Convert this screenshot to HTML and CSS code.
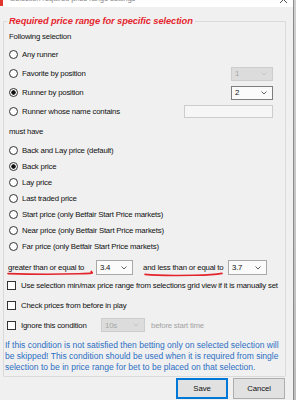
FILE: index.html
```html
<!DOCTYPE html>
<html>
<head>
<meta charset="utf-8">
<link rel="stylesheet" href="styles.css">
</head>
<body>
<div class="screen">
  <div class="window">
    <div class="titlebar">
      <span class="app-icon"></span>
      <span class="title">Selection required price range settings</span>
      <svg class="close" width="9" height="3" viewBox="0 0 9 3"><path d="M1 3 L8 -4 M8 3 L1 -4" stroke="#555" stroke-width="1" fill="none"/></svg>
    </div>
    <div class="client">
      <fieldset class="group">
        <legend>Required price range for specific selection</legend>
        <div class="caption first">Following selection</div>
        <div class="opt tall"><span class="radio"></span><span>Any runner</span></div>
        <div class="opt tall"><span class="radio"></span><span>Favorite by position</span>
          <span class="combo small disabled"><span class="val">1</span><svg class="chev" width="6" height="4" viewBox="0 0 6 4"><path d="M0.5 0.5 L3 3 L5.5 0.5" stroke="#c4c4c4" fill="none"/></svg></span></div>
        <div class="opt tall"><span class="radio on"></span><span>Runner by position</span>
          <span class="combo small"><span class="val">2</span><svg class="chev" width="6" height="4" viewBox="0 0 6 4"><path d="M0.5 0.5 L3 3 L5.5 0.5" stroke="#606060" fill="none"/></svg></span></div>
        <div class="opt tall"><span class="radio"></span><span>Runner whose name contains</span>
          <span class="textbox"></span></div>
        <div class="caption must">must have</div>
        <div class="opt"><span class="radio"></span><span>Back and Lay price (default)</span></div>
        <div class="opt"><span class="radio on"></span><span>Back price</span></div>
        <div class="opt"><span class="radio"></span><span>Lay price</span></div>
        <div class="opt"><span class="radio"></span><span>Last traded price</span></div>
        <div class="opt"><span class="radio"></span><span>Start price (only Betfair Start Price markets)</span></div>
        <div class="opt"><span class="radio"></span><span>Near price (only Betfair Start Price markets)</span></div>
        <div class="opt"><span class="radio"></span><span>Far price (only Betfair Start Price markets)</span></div>
        <div class="price-row">
          <span class="lbl-ge">greater than or equal to</span>
          <span class="combo c-from"><span class="val">3.4</span><svg class="chev" width="6" height="4" viewBox="0 0 6 4"><path d="M0.5 0.5 L3 3 L5.5 0.5" stroke="#606060" fill="none"/></svg></span>
          <span class="lbl-le">and less than or equal to</span>
          <span class="combo c-to"><span class="val">3.7</span><svg class="chev" width="6" height="4" viewBox="0 0 6 4"><path d="M0.5 0.5 L3 3 L5.5 0.5" stroke="#606060" fill="none"/></svg></span>
          <svg class="mark mark1" width="86" height="6" viewBox="0 0 86 6"><path d="M1 3.6 C 20 4.2, 50 4.4, 72 3.8 S 82 2.6, 84.5 1.4" stroke="#e3262d" stroke-width="1.6" fill="none" stroke-linecap="round"/></svg>
          <svg class="mark mark2" width="80" height="6" viewBox="0 0 80 6"><path d="M1 3.4 C 10 4.4, 30 4.6, 50 4.3 S 72 3.6, 78 2.4" stroke="#e3262d" stroke-width="1.6" fill="none" stroke-linecap="round"/></svg>
        </div>
        <div class="chk first-chk"><span class="box"></span><span>Use selection min/max price range from selections grid view if it is manually set</span></div>
        <div class="chk"><span class="box"></span><span>Check prices from before in play</span></div>
        <div class="chk"><span class="box"></span><span class="lbl-ign">Ignore this condition</span>
          <span class="combo c-sec disabled"><span class="val">10s</span><svg class="chev" width="6" height="4" viewBox="0 0 6 4"><path d="M0.5 0.5 L3 3 L5.5 0.5" stroke="#c4c4c4" fill="none"/></svg></span>
          <span class="muted">before start time</span></div>
        <p class="info">If this condition is not satisfied then betting only on selected selection will<br>be skipped! This condition should be used when it is required from single<br>selection to be in price range for bet to be placed on that selection.</p>
      </fieldset>
      <div class="buttons">
        <button class="btn default">Save</button>
        <button class="btn">Cancel</button>
      </div>
    </div>
  </div>
  <div class="edge"></div>
</div>
</body>
</html>
```
FILE: styles.css
```css
html, body {
  margin: 0;
  padding: 0;
  background: #f0f0f0;
  overflow: hidden;
}
.screen {
  display: flex;
  width: 296px;
  height: 400px;
  font-family: "Liberation Sans", Arial, sans-serif;
  font-size: 7.8px;
  letter-spacing: -0.2px;
  color: #111;
}
.window {
  width: 293px;
  height: 400px;
  background: #f0f0f0;
  border-right: 1px solid #8c8c8c;
  display: flex;
  flex-direction: column;
}
.edge {
  flex: 1;
  background: linear-gradient(#cfcfcf, #bdbdbd);
}
.titlebar {
  height: 7px;
  background: #fff;
  display: flex;
  align-items: flex-start;
  overflow: hidden;
  flex-shrink: 0;
}
.app-icon {
  width: 3px;
  height: 6px;
  background: #e0382e;
}
.title {
  margin-left: 7px;
  margin-top: -6px;
  line-height: 10px;
  font-size: 7.8px;
  color: #8a8a8a;
  white-space: nowrap;
}
.close {
  margin-left: auto;
  margin-right: 5px;
}
.client {
  padding-left: 3px;
  display: flex;
  flex-direction: column;
}
.group {
  margin: 8px 0 0 0;
  padding: 0;
  width: 283px;
  box-sizing: border-box;
  border: 1px solid #dadada;
  border-radius: 1px;
  min-width: 0;
}
.group legend {
  margin-left: 3px;
  padding: 0 2px;
  line-height: 12px;
  font-size: 9.3px;
  letter-spacing: -0.1px;
  font-weight: bold;
  font-style: italic;
  color: #e5262e;
}
.caption {
  display: flex;
  align-items: center;
  padding-left: 5px;
  height: 18px;
}
.caption.must {
  height: 21px;
}
.opt {
  display: flex;
  align-items: center;
  height: 16px;
  padding-left: 5px;
  white-space: nowrap;
}
.opt.tall {
  height: 19px;
}
.radio {
  width: 9px;
  height: 9px;
  box-sizing: border-box;
  border: 1px solid #333;
  border-radius: 50%;
  background: #fff;
  margin-right: 4px;
  flex-shrink: 0;
}
.radio.on {
  background: radial-gradient(circle, #111 0 1.9px, #fff 2.5px);
}
.combo {
  display: flex;
  align-items: center;
  justify-content: space-between;
  box-sizing: border-box;
  border: 1px solid #a8a8a8;
  background: #fbfbfb;
  padding: 0 5px 0 3px;
  flex-shrink: 0;
}
.combo.small {
  margin-left: auto;
  margin-right: 12px;
  width: 42px;
  height: 14px;
  border-color: #7d7d7d;
}
.combo.disabled {
  background: #dcdcdc;
  border-color: #cdcdcd;
  color: #a6a6a6;
}
.textbox {
  margin-left: auto;
  margin-right: 12px;
  width: 89px;
  height: 13px;
  box-sizing: border-box;
  border: 1px solid #cccccc;
  background: #f6f6f6;
}
.price-row {
  position: relative;
  display: flex;
  align-items: center;
  height: 22px;
  box-sizing: border-box;
  padding: 5px 0 0 4px;
  white-space: nowrap;
}
.lbl-ge {
  width: 88px;
}
.c-from {
  width: 37px;
  height: 15px;
}
.lbl-le {
  margin-left: 10px;
  width: 85px;
}
.c-to {
  width: 39px;
  height: 15px;
}
.mark {
  position: absolute;
}
.mark1 {
  left: 3px;
  top: 15.5px;
}
.mark2 {
  left: 140px;
  top: 16.5px;
}
.chk {
  display: flex;
  align-items: center;
  height: 20px;
  padding-left: 3px;
  white-space: nowrap;
}
.chk.first-chk {
  height: 19px;
}
.box {
  width: 9px;
  height: 9px;
  box-sizing: border-box;
  border: 1px solid #333;
  background: #fff;
  margin-right: 5px;
  flex-shrink: 0;
}
.lbl-ign {
  width: 80px;
}
.c-sec {
  width: 44px;
  height: 14px;
}
.muted {
  margin-left: 6px;
  color: #a3a3a3;
}
.info {
  margin: 0;
  padding: 5px 0 3.5px 1px;
  font-size: 8.5px;
  letter-spacing: 0;
  line-height: 10.75px;
  color: #2c6fc4;
  white-space: nowrap;
}
.buttons {
  display: flex;
  justify-content: flex-end;
  gap: 5px;
  margin-top: 1px;
  padding-right: 8px;
}
.btn {
  width: 52px;
  height: 21px;
  margin: 0;
  padding: 0;
  box-sizing: border-box;
  border: 1px solid #adadad;
  background: #e1e1e1;
  font-family: "Liberation Sans", Arial, sans-serif;
  font-size: 7.8px;
  letter-spacing: -0.1px;
  color: #111;
}
.btn.default {
  border: 1px solid #0078d7;
  box-shadow: inset 0 0 0 1px #0078d7;
}
```
